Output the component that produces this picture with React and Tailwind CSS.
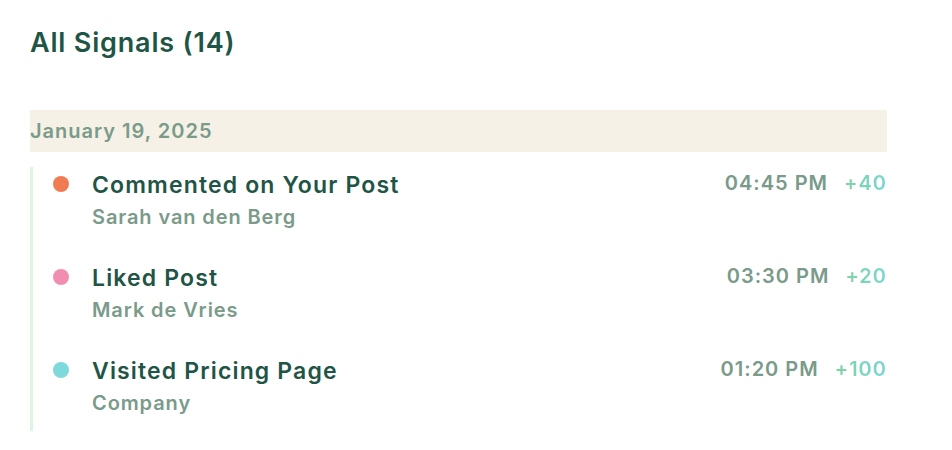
export default function App() {
  const signals = [
    { title: "Commented on Your Post", who: "Sarah van den Berg", time: "04:45 PM", points: "+40", dot: "bg-[#f07b52]" },
    { title: "Liked Post", who: "Mark de Vries", time: "03:30 PM", points: "+20", dot: "bg-[#f08db0]" },
    { title: "Visited Pricing Page", who: "Company", time: "01:20 PM", points: "+100", dot: "bg-[#7fd8dc]" },
  ];

  return (
    <div className="min-h-screen w-full bg-white font-['Inter',sans-serif] pl-[30px] pr-[65px] pt-[27px]">
      <h2 className="text-[27px] leading-[32px] font-semibold tracking-[0.03em] text-[#1f5546]">
        All Signals (14)
      </h2>

      <div className="mt-[51px] h-[42px] flex items-center bg-[#f5f1e6] text-[20px] font-semibold tracking-[0.05em] text-[#7a9a8a]">
        January 19, 2025
      </div>

      <ul className="mt-[15px] border-l-[3px] border-[#dcf5e3] pt-1 pb-[14px] space-y-[33px]">
        {signals.map((s) => (
          <li key={s.title} className="flex items-start pl-5">
            <span className={`mt-[5px] w-4 h-4 rounded-full shrink-0 ${s.dot}`} />
            <div className="ml-[23px] flex-1">
              <p className="text-[23px] leading-[28px] font-semibold tracking-[0.05em] text-[#1f5546]">{s.title}</p>
              <p className="mt-1 text-[20px] leading-[28px] font-semibold tracking-[0.045em] text-[#7a9a8a]">{s.who}</p>
            </div>
            <div className="flex items-center gap-4 text-[20px] leading-6 font-semibold tracking-[0.05em]">
              <span className="text-[#7a9a8a]">{s.time}</span>
              <span className="bg-gradient-to-r from-[#7fd3a0] to-[#7ad6d6] bg-clip-text text-transparent">
                {s.points}
              </span>
            </div>
          </li>
        ))}
      </ul>
    </div>
  );
}
